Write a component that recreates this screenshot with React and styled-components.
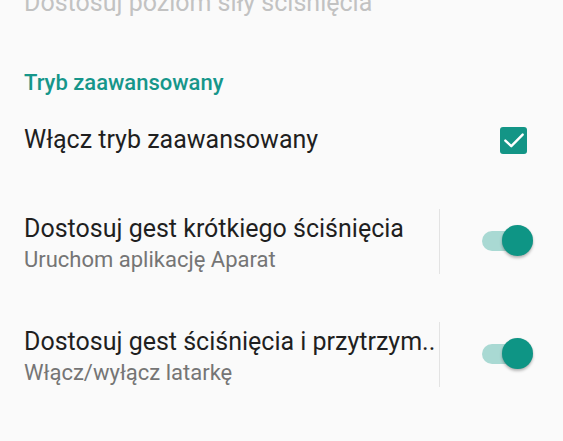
import React from "react";
import styled, { createGlobalStyle } from "styled-components";

const Global = createGlobalStyle`
  html, body { margin: 0; padding: 0; background: #fafafa; }
  body { font-family: Roboto, "Noto Sans", Arial, sans-serif; -webkit-font-smoothing: antialiased; }
  #root { width: 563px; height: 441px; overflow: hidden; }
`;

const Screen = styled.div`
  width: 563px;
  height: 441px;
  overflow: hidden;
  background: #fafafa;
  display: flex;
  flex-direction: column;
`;

const DisabledTitle = styled.div`
  margin-top: -14px;
  padding-left: 24px;
  font-size: 25px;
  line-height: 34px;
  color: #c2c2c2;
  white-space: nowrap;
`;

const SectionHeader = styled.div`
  padding: 50px 24px 0;
  height: 26px;
  font-size: 22px;
  font-weight: 500;
  line-height: 26px;
  color: #16968a;
`;

const Row = styled.div`
  display: flex;
  align-items: center;
  height: ${(p) => p.$h}px;
`;

const TextBlock = styled.div`
  flex: 1;
  min-width: 0;
  padding-left: 24px;
  padding-top: ${(p) => p.$pt || 0}px;
  display: flex;
  flex-direction: column;
`;

const Title = styled.div`
  font-size: 25px;
  line-height: 32px;
  color: #1f1f1f;
  white-space: nowrap;
  overflow: hidden;
`;

const Summary = styled.div`
  font-size: 22px;
  line-height: 30px;
  color: #757575;
  white-space: nowrap;
`;

const Divider = styled.div`
  width: 1px;
  height: 65px;
  background: #e3e3e3;
  flex-shrink: 0;
`;

const Widget = styled.div`
  width: ${(p) => p.$w}px;
  flex-shrink: 0;
  display: flex;
  justify-content: flex-end;
  align-items: center;
  padding-right: ${(p) => p.$pr}px;
  box-sizing: border-box;
`;

const CheckBox = styled.div`
  width: 27px;
  height: 27px;
  border-radius: 3px;
  background: #139586;
  display: flex;
  align-items: center;
  justify-content: center;
`;

const Track = styled.div`
  position: relative;
  width: 46px;
  height: 20px;
  border-radius: 10px;
  background: #a9d9d3;
`;

const Thumb = styled.div`
  position: absolute;
  right: -5px;
  top: 50%;
  width: 31px;
  height: 31px;
  margin-top: -16.5px;
  border-radius: 50%;
  background: #0e9585;
  box-shadow: 0 2px 3px rgba(0, 0, 0, 0.28), 0 0 1px rgba(0, 0, 0, 0.12);
`;

function Switch() {
  return (
    <Track>
      <Thumb />
    </Track>
  );
}

export default function App() {
  return (
    <>
      <Global />
      <Screen>
        <DisabledTitle>Dostosuj poziom siły ściśnięcia</DisabledTitle>
        <SectionHeader>Tryb zaawansowany</SectionHeader>
        <Row $h={88}>
          <TextBlock>
            <Title>Włącz tryb zaawansowany</Title>
          </TextBlock>
          <Widget $w={140} $pr={36}>
            <CheckBox>
              <svg width="26" height="26" viewBox="0 0 24 24">
                <path d="M4 12.5l5.5 5.2L20 7" fill="none" stroke="#fff" strokeWidth="2.2" strokeLinecap="round" strokeLinejoin="round" />
              </svg>
            </CheckBox>
          </Widget>
        </Row>
        <Row $h={114}>
          <TextBlock $pt={6}>
            <Title>Dostosuj gest krótkiego ściśnięcia</Title>
            <Summary>Uruchom aplikację Aparat</Summary>
          </TextBlock>
          <Divider />
          <Widget $w={123} $pr={35}>
            <Switch />
          </Widget>
        </Row>
        <Row $h={112}>
          <TextBlock $pt={6}>
            <Title>Dostosuj gest ściśnięcia i przytrzym..</Title>
            <Summary>Włącz/wyłącz latarkę</Summary>
          </TextBlock>
          <Divider />
          <Widget $w={123} $pr={35}>
            <Switch />
          </Widget>
        </Row>
      </Screen>
    </>
  );
}
